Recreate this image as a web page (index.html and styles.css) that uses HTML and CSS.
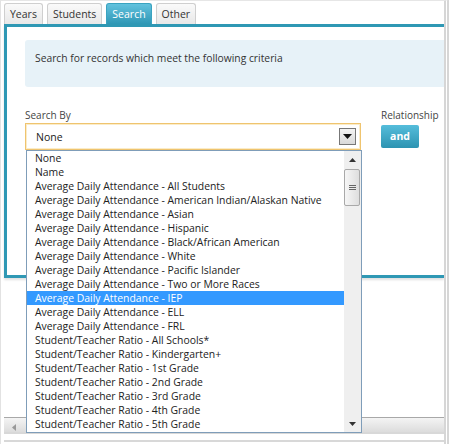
FILE: index.html
```html
<!DOCTYPE html>
<html>
<head>
<meta charset="utf-8">
<link rel="stylesheet" href="styles.css">
</head>
<body>
<div class="frame">
  <div class="tabs">
    <div class="tab">Years</div>
    <div class="tab">Students</div>
    <div class="tab active">Search</div>
    <div class="tab">Other</div>
  </div>
  <div class="panel">
    <div class="info">Search for records which meet the following criteria</div>
    <div class="form-row">
      <div class="field">
        <div class="label">Search By</div>
        <div class="select">
          <span>None</span>
          <span class="select-btn"><svg width="9" height="5" viewBox="0 0 9 5"><path d="M0 0H9L4.5 5Z" fill="#111"/></svg></span>
        </div>
      </div>
      <div class="field rel">
        <div class="label">Relationship</div>
        <div class="btn">and</div>
      </div>
    </div>
  </div>
  <div class="hscroll">
    <span class="harrow"><svg width="4" height="7" viewBox="0 0 4 7"><path d="M4 0V7L0 3.5Z" fill="#999"/></svg></span>
  </div>
  <div class="bottom-strip"></div>

  <div class="dropdown">
    <ul class="options">
      <li>None</li>
      <li>Name</li>
      <li>Average Daily Attendance - All Students</li>
      <li>Average Daily Attendance - American Indian/Alaskan Native</li>
      <li>Average Daily Attendance - Asian</li>
      <li>Average Daily Attendance - Hispanic</li>
      <li>Average Daily Attendance - Black/African American</li>
      <li>Average Daily Attendance - White</li>
      <li>Average Daily Attendance - Pacific Islander</li>
      <li>Average Daily Attendance - Two or More Races</li>
      <li class="sel">Average Daily Attendance - IEP</li>
      <li>Average Daily Attendance - ELL</li>
      <li>Average Daily Attendance - FRL</li>
      <li>Student/Teacher Ratio - All Schools*</li>
      <li>Student/Teacher Ratio - Kindergarten+</li>
      <li>Student/Teacher Ratio - 1st Grade</li>
      <li>Student/Teacher Ratio - 2nd Grade</li>
      <li>Student/Teacher Ratio - 3rd Grade</li>
      <li>Student/Teacher Ratio - 4th Grade</li>
      <li>Student/Teacher Ratio - 5th Grade</li>
    </ul>
    <div class="vscroll">
      <div class="varrow"><svg width="7" height="4" viewBox="0 0 7 4"><path d="M0 4H7L3.5 0Z" fill="#333"/></svg></div>
      <div class="thumb">
        <span></span><span></span><span></span>
      </div>
      <div class="vspace"></div>
      <div class="varrow"><svg width="7" height="4" viewBox="0 0 7 4"><path d="M0 0H7L3.5 4Z" fill="#333"/></svg></div>
    </div>
  </div>
</div>
</body>
</html>
```
FILE: styles.css
```css
* { box-sizing: border-box; }
html, body { margin: 0; padding: 0; background: #fff; }
body { font-family: "Open Sans", "Noto Sans", "DejaVu Sans", sans-serif; color: #333; }

.frame {
  position: relative;
  width: 449px;
  height: 444px;
  overflow: hidden;
  background: #fff;
  border-left: 1px solid #e2e2e2;
  border-right: 5px double #d6d6d6;
  border-top: 1px solid #e6e6e6;
  display: flex;
  flex-direction: column;
  padding-left: 3px;
}

.tabs {
  display: flex;
  gap: 4px;
  padding-top: 2px;
  height: 23px;
}
.tab {
  height: 21px;
  padding: 0 5px;
  font-size: 10.5px;
  line-height: 21px;
  color: #333;
  border: 1px solid #cfcfcf;
  border-bottom: none;
  border-radius: 3px 3px 0 0;
  background: linear-gradient(#fafafa, #e8e8e8);
}
.tab.active {
  color: #fff;
  border-color: #3aa3c0;
  background: linear-gradient(#62c2de, #2f97b5);
}

.panel {
  height: 254px;
  border-top: 3px solid #2f98b4;
  border-left: 3px solid #2f98b4;
  border-bottom: 3px solid #2f98b4;
  padding: 13px 0 0 18px;
  box-shadow: 0 2px 2px rgba(0,0,0,0.12);
}
.info {
  height: 47px;
  background: #e7f2f8;
  border-radius: 3px 0 0 3px;
  font-size: 10.3px;
  padding: 11px 0 0 10px;
  color: #333;
}

.form-row {
  display: flex;
  margin-top: 21px;
}
.label {
  font-size: 10px;
  color: #444;
  height: 14px;
  line-height: 14px;
}
.select {
  margin-top: 1px;
  width: 336px;
  height: 27px;
  border: 1px solid #efc46f;
  box-shadow: inset 0 0 0 1px #fbecc8;
  display: flex;
  align-items: center;
  justify-content: space-between;
  padding: 0 4px 0 10px;
  font-size: 10.5px;
  color: #222;
}
.select-btn {
  width: 17px;
  height: 17px;
  border: 1px solid #777;
  background: linear-gradient(#f3f3f3, #d9d9d9);
  display: flex;
  align-items: center;
  justify-content: center;
}
.rel { margin-left: 20px; }
.btn {
  margin-top: 3px;
  width: 38px;
  height: 23px;
  border-radius: 2px;
  background: linear-gradient(#55bddb, #2c93b1);
  color: #fff;
  font-weight: bold;
  font-size: 10.5px;
  line-height: 23px;
  text-align: center;
}

.hscroll {
  margin-top: auto;
  height: 15px;
  flex: none;
  border-top: 1px solid #a8a8a8;
  background: linear-gradient(#f4f4f4, #dcdcdc);
  display: flex;
  align-items: center;
  padding-left: 8px;
}
.bottom-strip {
  height: 10px;
  flex: none;
  border-top: 2px solid #d8d8d8;
  border-bottom: 2px solid #d8d8d8;
  margin-bottom: 2px;
}

.dropdown {
  position: absolute;
  left: 25px;
  top: 149px;
  width: 336px;
  height: 283px;
  border: 1px solid #7f9db9;
  background: #fff;
  display: flex;
}
.options {
  list-style: none;
  margin: 0;
  padding: 0;
  flex: 1;
}
.options li {
  height: 14px;
  line-height: 14px;
  font-size: 10.4px;
  padding-left: 8px;
  white-space: nowrap;
  overflow: hidden;
  color: #222;
}
.options li.sel { background: #3399ff; color: #fff; }

.vscroll {
  width: 17px;
  background: #efefef;
  display: flex;
  flex-direction: column;
}
.varrow {
  height: 17px;
  display: flex;
  align-items: center;
  justify-content: center;
}
.thumb {
  height: 37px;
  margin: 1px 1px 0 0;
  border: 1px solid #a9a9a9;
  border-radius: 2px;
  background: linear-gradient(90deg, #f6f6f6, #dedede);
  display: flex;
  flex-direction: column;
  align-items: center;
  justify-content: center;
  gap: 1px;
}
.thumb span { display: block; width: 7px; height: 1px; background: #666; }
.vspace { flex: 1; }
```
